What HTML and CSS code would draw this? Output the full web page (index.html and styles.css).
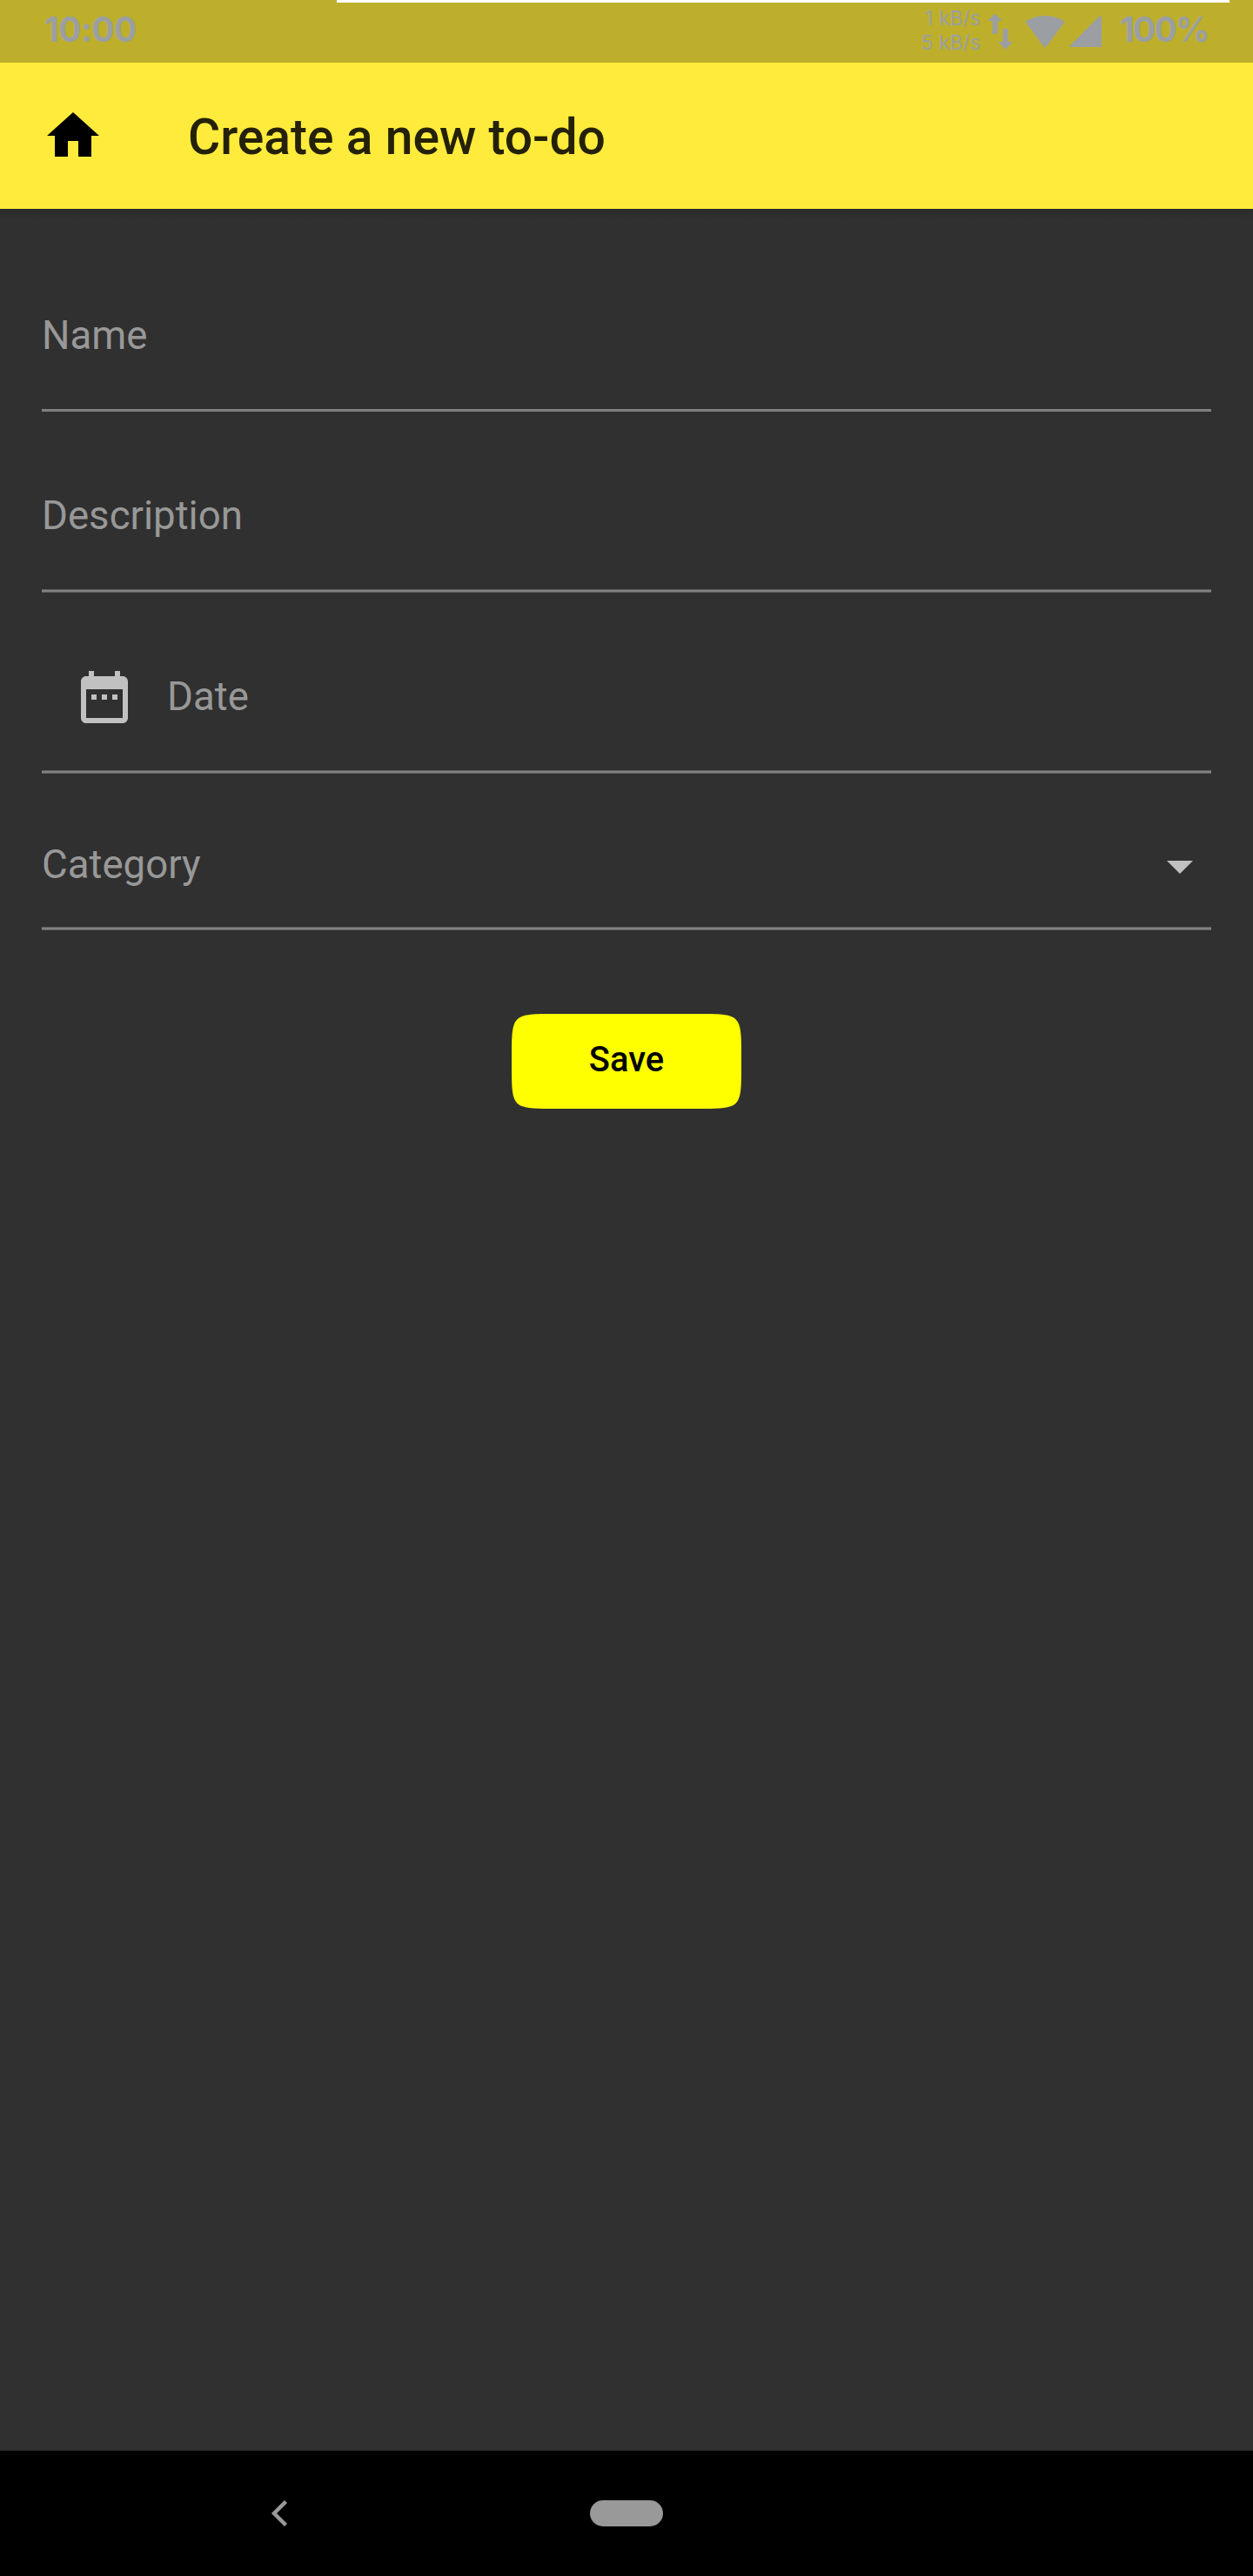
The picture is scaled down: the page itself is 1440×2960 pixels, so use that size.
FILE: index.html
```html
<!DOCTYPE html>
<html lang="en">
<head>
<meta charset="utf-8">
<title>Create a new to-do</title>
<link rel="stylesheet" href="styles.css">
</head>
<body>
<div class="screen">
  <div class="status">
    <div class="progress"></div>
    <span class="clock">10:00</span>
    <div class="indicators">
      <div class="rates"><span class="rate-up">1 kB/s</span><span class="rate-down">5 kB/s</span></div>
      <svg class="arrows" width="29" height="42" viewBox="0 0 29 42"><path d="M8.500 0.500 17 9h-5.500V24h-6V9H0zM17.500 18h6v15H29l-8.500 9-8.500-9h5.500z"/></svg>
      <svg class="wifi" width="46" height="37" viewBox="0 0 46 37"><path d="M1 8Q0 7 1.500 6C14-2 32-2 44.500 6Q46 7 45 8L24.500 35.500Q23 37 21.500 35.500z"/></svg>
      <svg class="cell" width="37" height="37" viewBox="0 0 37 37"><path d="M1 34 34 1Q37-1 37 2V35Q37 36 36 36H2Q-1 36 1 34z"/></svg>
      <span class="battery">100%</span>
    </div>
  </div>
  <header class="appbar">
    <svg class="home" width="72" height="72" viewBox="0 0 24 24"><path d="M10 20v-6h4v6h5v-8h3L12 3 2 12h3v8z"/></svg>
    <h1 class="title">Create a new to-do</h1>
  </header>
  <main class="form">
    <div class="field field-name"><span class="label">Name</span></div>
    <div class="field field-description"><span class="label">Description</span></div>
    <div class="field field-date">
      <svg class="calendar" width="72" height="72" viewBox="0 0 24 24"><path d="M9 11H7v2h2v-2zm4 0h-2v2h2v-2zm4 0h-2v2h2v-2zm2-7h-1V2h-2v2H8V2H6v2H5c-1.110 0-2 .9-2 2v14c0 1.100.89 2 2 2h14c1.100 0 2-.9 2-2V6c0-1.100-.9-2-2-2zm0 16H5V9h14v11z"/></svg>
      <span class="label">Date</span>
    </div>
    <div class="field field-category">
      <span class="label">Category</span>
      <svg class="caret" width="72" height="72" viewBox="0 0 24 24"><path d="M7 10l5 5 5-5z"/></svg>
    </div>
    <button class="save" type="button">Save</button>
  </main>
  <nav class="navbar">
    <svg class="back" width="20" height="32" viewBox="0 0 20 32"><path d="M17.500 2.500 4 16l13.500 13.500"/></svg>
    <div class="pill"></div>
  </nav>
</div>
</body>
</html>
```

FILE: styles.css
```css
* { box-sizing: border-box; }
body { margin: 0; background: #303030; font-family: Roboto, sans-serif; }
svg { display: block; flex: none; }
.screen { display: flex; flex-direction: column; width: 1440px; height: 2960px; background: #303030; overflow: hidden; }

.status { position: relative; display: flex; justify-content: space-between; height: 72px; padding-left: 51px; padding-right: 50px; background: #bdaf2b; color: #9b9fa3; font-family: Inter, sans-serif; }
.status svg { fill: #9b9fa3; }
.progress { position: absolute; left: 387px; top: 0; width: 1026px; height: 3px; background: #fff; }
.clock, .battery { font-size: 39px; font-weight: 700; line-height: 68px; white-space: nowrap; }
.clock { letter-spacing: -0.6px; }
.battery { width: 103px; letter-spacing: -1.8px; }
.indicators { display: flex; }
.rates { display: flex; flex-direction: column; align-items: flex-end; margin-right: 8px; padding-top: 7px; font-size: 23px; line-height: 28px; white-space: nowrap; }
.arrows { margin-top: 15px; margin-right: 14px; }
.wifi { margin-top: 18px; margin-right: 5px; }
.cell { margin-top: 18px; margin-right: 21px; }

.appbar { display: flex; align-items: center; gap: 96px; height: 168px; padding-left: 48px; background: #ffeb3b; }
.title { margin: 0; padding-top: 3px; font-size: 57px; font-weight: 500; line-height: 66px; color: #242108; }

.form { display: flex; flex: 1; flex-direction: column; padding: 25px 48px 0; background: linear-gradient(#2a2a2a, #303030 12px); }
.field { display: flex; align-items: center; height: 208px; padding-top: 36px; padding-bottom: 4px; background: linear-gradient(#606060 1px, #828282 1px 3px, #606060 3px) bottom / 100% 4px no-repeat; }
.field-name { padding-bottom: 3px; background: linear-gradient(#808080, #808080) bottom / 100% 3px no-repeat; }
.field-date { padding-left: 36px; gap: 36px; }
.field-category { height: 180px; justify-content: space-between; }
.label { font-size: 45.6px; line-height: 54px; color: #989898; }
.field-category .label { margin-top: -3px; }
.calendar, .caret { fill: #c1c1c1; }

.save { align-self: center; width: 264px; height: 109px; margin-top: 96px; padding: 0 0 3px; border: 0; background: #ff0; color: #000; font: 500 39.9px/46px Roboto, sans-serif; clip-path: path("M0 51C0 0 0 0 51 0H213C264 0 264 0 264 51V58C264 109 264 109 213 109H51C0 109 0 109 0 58Z"); }

.navbar { display: flex; align-items: center; height: 144px; padding-left: 311px; background: #000; }
.back { fill: none; stroke: #999; stroke-width: 4.500; }
.pill { width: 84px; height: 30px; margin-left: 347px; border-radius: 15px; background: #999; }
```
